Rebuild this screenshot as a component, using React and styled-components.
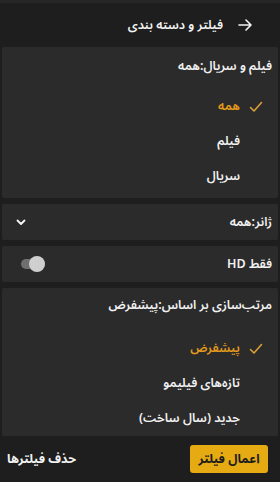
import React from "react";
import styled, { createGlobalStyle } from "styled-components";

const Global = createGlobalStyle`
  html, body { margin: 0; padding: 0; background: #1e1e1e; }
  body { font-family: "Noto Sans Arabic", "DejaVu Sans", sans-serif; color: #f2f2f2; line-height: 1.3; }
  * { box-sizing: border-box; }
`;

const Page = styled.div`
  direction: rtl;
  width: 280px;
  height: 482px;
  display: flex;
  flex-direction: column;
  background: #1e1e1e;
  border-top: 3px solid #262626;
  overflow: hidden;
`;

const Header = styled.header`
  height: 44px;
  display: flex;
  align-items: center;
  gap: 15px;
  padding-right: 28px;
  font-size: 12.5px;
  font-weight: 600;
  color: #f4f4f4;
  white-space: nowrap;
`;

const Body = styled.main`
  display: flex;
  flex-direction: column;
  gap: 6px;
  padding: 0 2px;
`;

const Card = styled.section`
  background: #2b2b2b;
  border-radius: 2px;
  padding-bottom: ${(p) => p.$pb || 0}px;
`;

const CardTitle = styled.div`
  height: ${(p) => p.$h || 38}px;
  display: flex;
  align-items: center;
  padding: 0 6px;
  font-size: 12.5px;
  font-weight: 600;
  white-space: nowrap;
  margin-bottom: ${(p) => p.$mb || 0}px;
`;

const Row = styled.div`
  height: 36px;
  display: flex;
  align-items: center;
  justify-content: space-between;
  padding: 0 6px 0 14px;
  font-size: 12.5px;
  font-weight: 600;
  white-space: nowrap;
`;

const Option = styled.div`
  height: 35px;
  display: flex;
  align-items: center;
  position: relative;
  padding-right: 38px;
  font-size: 12.5px;
  font-weight: 600;
  white-space: nowrap;
  color: ${(p) => (p.$active ? "#e39a1c" : "#f2f2f2")};
`;

const Check = styled.svg`
  position: absolute;
  right: 15px;
  top: 50%;
  transform: translateY(-50%);
`;

const Toggle = styled.div`
  position: relative;
  width: 27px;
  height: 16px;
  display: flex;
  align-items: center;
  margin-left: 2px;
`;

const Track = styled.div`
  width: 24px;
  height: 10px;
  border-radius: 5px;
  background: #6f6f6f;
`;

const Knob = styled.div`
  position: absolute;
  left: 11px;
  top: 0;
  width: 16px;
  height: 16px;
  border-radius: 50%;
  background: #cfcfcf;
`;

const Footer = styled.footer`
  flex: 1;
  display: flex;
  align-items: center;
  justify-content: space-between;
  padding: 0 12px 0 7px;
`;

const Apply = styled.button`
  width: 78px;
  height: 28px;
  padding: 0;
  border: none;
  border-radius: 3px;
  background: #e6aa12;
  color: #1c1c1c;
  font-family: inherit;
  font-size: 12.5px;
  font-weight: 700;
  white-space: nowrap;
  direction: rtl;
`;

const Clear = styled.span`
  font-size: 12.5px;
  font-weight: 700;
  white-space: nowrap;
  color: #f2f2f2;
`;

const CheckIcon = () => (
  <Check width="14" height="12" viewBox="0 0 14 12" fill="none">
    <path d="M1.5 6.5 L5 10 L12.5 1.5" stroke="#d9a03a" strokeWidth="1.6" strokeLinecap="round" strokeLinejoin="round" />
  </Check>
);

export default function App() {
  return (
    <>
      <Global />
      <Page>
        <Header>
          <svg width="14" height="14" viewBox="0 0 14 14" fill="none">
            <path d="M1 7 H13 M8 2 L13 7 L8 12" stroke="#f4f4f4" strokeWidth="1.6" strokeLinecap="round" strokeLinejoin="round" />
          </svg>
          <span>فیلتر و دسته بندی</span>
        </Header>
        <Body>
          <Card $pb={4}>
            <CardTitle $h={38} $mb={4}>فیلم و سریال:همه</CardTitle>
            <Option $active>
              <CheckIcon />
              همه
            </Option>
            <Option>فیلم</Option>
            <Option>سریال</Option>
          </Card>
          <Card>
            <Row>
              <span>ژانر:همه</span>
              <svg width="10" height="7" viewBox="0 0 10 7" fill="none">
                <path d="M1.5 1.5 L5 5 L8.5 1.5" stroke="#f4f4f4" strokeWidth="1.8" strokeLinecap="round" strokeLinejoin="round" />
              </svg>
            </Row>
          </Card>
          <Card>
            <Row>
              <span>فقط HD</span>
              <Toggle>
                <Track />
                <Knob />
              </Toggle>
            </Row>
          </Card>
          <Card>
            <CardTitle $h={34} $mb={9}>مرتب‌سازی بر اساس:پیشفرض</CardTitle>
            <Option $active>
              <CheckIcon />
              پیشفرض
            </Option>
            <Option>تازه‌های فیلیمو</Option>
            <Option>جدید (سال ساخت)</Option>
          </Card>
        </Body>
        <Footer>
          <Apply>اعمال فیلتر</Apply>
          <Clear>حذف فیلترها</Clear>
        </Footer>
      </Page>
    </>
  );
}
